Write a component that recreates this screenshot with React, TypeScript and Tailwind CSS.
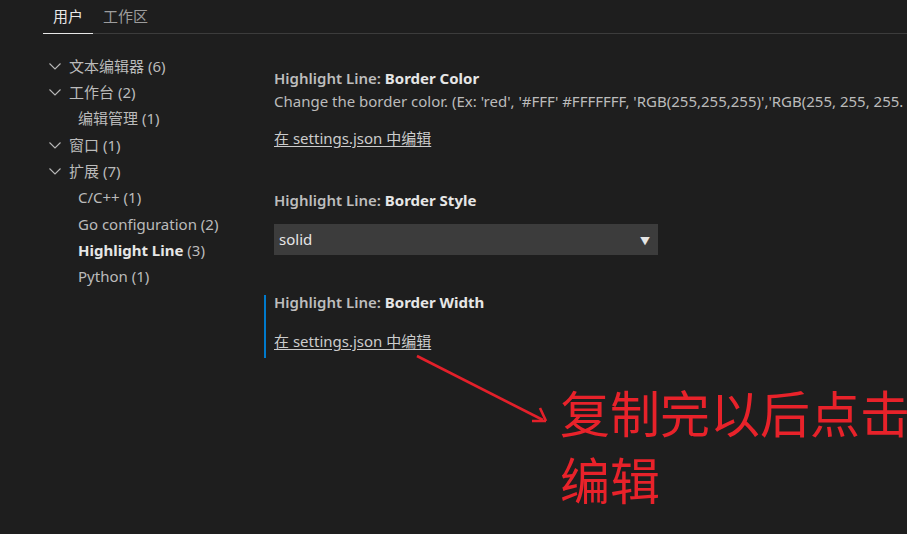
import { useState } from "react";

const FONT = "font-['Noto_Sans','Noto_Sans_CJK_SC',sans-serif]";

type Node = { label: string; count: number; depth: 0 | 1; bold?: boolean };

const tree: Node[] = [
  { label: "文本编辑器", count: 6, depth: 0 },
  { label: "工作台", count: 2, depth: 0 },
  { label: "编辑管理", count: 1, depth: 1 },
  { label: "窗口", count: 1, depth: 0 },
  { label: "扩展", count: 7, depth: 0 },
  { label: "C/C++", count: 1, depth: 1 },
  { label: "Go configuration", count: 2, depth: 1 },
  { label: "Highlight Line", count: 3, depth: 1, bold: true },
  { label: "Python", count: 1, depth: 1 },
];

const Chevron = () => (
  <svg width="12" height="7" viewBox="0 0 12 7" className="shrink-0">
    <path d="M0.5 0.5 L6 6 L11.5 0.5" fill="none" stroke="#b8b8b8" strokeWidth="1.1" />
  </svg>
);

const SettingTitle = ({ name }: { name: string }) => (
  <div className="h-[14px] leading-[14px] text-[15px] whitespace-nowrap">
    <span className="text-[#bdbdbd] font-semibold">Highlight Line: </span>
    <span className="text-[#e6e6e6] font-bold">{name}</span>
  </div>
);

const EditLink = ({ className }: { className: string }) => (
  <a
    href="#"
    className={`block w-fit leading-[18px] text-[15px] text-[#cccccc] underline underline-offset-2 ${className}`}
  >
    在 settings.json 中编辑
  </a>
);

export default function App() {
  const [tab, setTab] = useState("user");
  const [style, setStyle] = useState("solid");

  const tabClass = (active: boolean) =>
    `px-[10px] h-[29px] pt-[1px] pb-[8px] leading-[20px] text-[15px] -mb-px border-b ${
      active ? "border-[#e7e7e7] text-[#e7e7e7]" : "border-transparent text-[#9d9d9d]"
    }`;

  return (
    <div className={`relative w-full h-[534px] overflow-hidden bg-[#1e1e1e] ${FONT}`}>
      {/* tabs */}
      <div className="pl-[43px] pt-[5px]">
        <div className="flex border-b border-[#3c3c3c]">
          <button onClick={() => setTab("user")} className={tabClass(tab === "user")}>
            用户
          </button>
          <button onClick={() => setTab("workspace")} className={tabClass(tab === "workspace")}>
            工作区
          </button>
        </div>
      </div>

      <div className="flex pl-[43px]">
        {/* tree */}
        <div className="w-[221px] shrink-0 pt-[19px]">
          {tree.map((n) => (
            <div
              key={n.label}
              className={`flex items-center h-[26.3px] text-[15px] text-[#bbbbbb] whitespace-nowrap ${
                n.depth === 0 ? "pl-[6px]" : "pl-[35px]"
              }`}
            >
              {n.depth === 0 && (
                <span className="w-[20px] flex items-center">
                  <Chevron />
                </span>
              )}
              <span className={n.bold ? "font-bold text-[#e6e6e6]" : ""}>{n.label}</span>
              <span>&nbsp;({n.count})</span>
            </div>
          ))}
        </div>

        {/* settings */}
        <div className="flex-1 min-w-0 pt-[37px]">
          <div className="border-l-2 border-transparent pl-[8px] pb-[8px]">
            <SettingTitle name="Border Color" />
            <div className="mt-[7px] leading-[18px] text-[15px] text-[#bbbbbb] whitespace-nowrap">
              Change the border color. (Ex: 'red', '#FFF' #FFFFFFF, 'RGB(255,255,255)','RGB(255, 255, 255. 0.5)')
            </div>
            <EditLink className="mt-[19px]" />
          </div>

          <div className="mt-[38px] border-l-2 border-transparent pl-[8px] pb-[8px]">
            <SettingTitle name="Border Style" />
            <div className="relative mt-[17px] w-[384px]">
              <select
                value={style}
                onChange={(e) => setStyle(e.target.value)}
                className="appearance-none w-full h-[31px] bg-[#3c3c3c] text-[#e6e6e6] text-[15px] pl-[5px] outline-none"
              >
                <option value="solid">solid</option>
                <option value="dashed">dashed</option>
                <option value="dotted">dotted</option>
              </select>
              <span className="pointer-events-none absolute right-[8px] top-[10px] text-[10px] text-[#e6e6e6]">▼</span>
            </div>
          </div>

          <div className="mt-[32px] border-l-2 border-[#007acc] pl-[8px] pb-[8px] w-fit">
            <SettingTitle name="Border Width" />
            <EditLink className="mt-[23px]" />
          </div>
        </div>
      </div>

      {/* annotation */}
      <svg className="absolute left-0 top-0 pointer-events-none" width="907" height="534">
        <line x1="417" y1="356" x2="543" y2="420" stroke="#e3202a" strokeWidth="2.6" />
        <path d="M546 421 L532 421 M546 421 L540 408" stroke="#e3202a" strokeWidth="2.6" fill="none" />
      </svg>
      <div className="absolute left-[560px] top-[378px] text-[50px] leading-[67px] text-[#e8222a] whitespace-nowrap font-['Noto_Sans_CJK_SC',sans-serif]">
        复制完以后点击
        <br />
        编辑
      </div>
    </div>
  );
}
